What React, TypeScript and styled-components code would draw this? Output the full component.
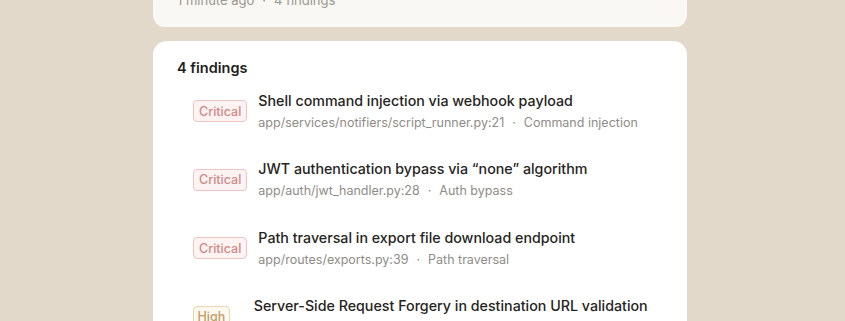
import React from "react";
import styled, { createGlobalStyle } from "styled-components";

const Global = createGlobalStyle`
  html, body { margin: 0; padding: 0; background: #e3d9cb; overflow: hidden; }
  body { font-family: Inter, "Noto Sans", sans-serif; -webkit-font-smoothing: antialiased; }
`;

const Page = styled.div`
  width: 845px;
  height: 321px;
  overflow: hidden;
  background: #e3d9cb;
  padding-left: 153px;
  box-sizing: border-box;
`;

const Column = styled.div`
  width: 534px;
  display: flex;
  flex-direction: column;
  gap: 14px;
  margin-top: -25px;
`;

const SummaryCard = styled.div`
  background: #f9f8f4;
  border-radius: 12px;
  padding: 16px 24px 18px;
`;

const Meta = styled.div`
  font-size: 13px;
  line-height: 18px;
  color: #9b9892;
  display: flex;
  gap: 8px;
`;

const FindingsCard = styled.div`
  background: #ffffff;
  border-radius: 14px;
  padding: 17px 24px 30px;
  height: 320px;
`;

const Heading = styled.div`
  font-size: 14.5px;
  line-height: 20px;
  font-weight: 600;
  color: #1f1e1c;
  margin-bottom: 11.5px;
`;

const List = styled.div`
  display: flex;
  flex-direction: column;
  gap: 25.5px;
  padding-left: 16px;
`;

const Row = styled.div<{ $gap: number }>`
  display: flex;
  align-items: center;
  gap: ${(p) => p.$gap}px;
`;

const Badge = styled.span<{ $tone: "critical" | "high" }>`
  box-sizing: border-box;
  height: 22px;
  padding: 0 ${(p) => (p.$tone === "critical" ? 5 : 3.5)}px;
  display: inline-flex;
  align-items: center;
  border-radius: 4px;
  font-size: 12.5px;
  font-weight: 500;
  border: 1px solid ${(p) => (p.$tone === "critical" ? "#edc3c3" : "#e8d5b1")};
  background: ${(p) => (p.$tone === "critical" ? "#fdf3f3" : "#fdf8ee")};
  color: ${(p) => (p.$tone === "critical" ? "#cf8986" : "#bf9d6a")};
  flex-shrink: 0;
`;

const Text = styled.div`
  display: flex;
  flex-direction: column;
`;

const Title = styled.div`
  font-size: 14.25px;
  line-height: 22px;
  font-weight: 500;
  color: #262522;
  white-space: nowrap;
`;

const Sub = styled.div`
  font-size: 12.5px;
  line-height: 21px;
  color: #8f8c87;
  display: flex;
  gap: 8px;
  white-space: nowrap;
`;

const findings = [
  { sev: "critical" as const, label: "Critical", title: "Shell command injection via webhook payload", file: "app/services/notifiers/script_runner.py:21", kind: "Command injection", gap: 11 },
  { sev: "critical" as const, label: "Critical", title: "JWT authentication bypass via \u201cnone\u201d algorithm", file: "app/auth/jwt_handler.py:28", kind: "Auth bypass", gap: 11 },
  { sev: "critical" as const, label: "Critical", title: "Path traversal in export file download endpoint", file: "app/routes/exports.py:39", kind: "Path traversal", gap: 11 },
  { sev: "high" as const, label: "High", title: "Server-Side Request Forgery in destination URL validation", file: "app/services/destinations.py:52", kind: "SSRF", gap: 24 },
];

export default function App() {
  return (
    <Page>
      <Global />
      <Column>
        <SummaryCard>
          <Meta>
            <span>1 minute ago</span>
            <span>·</span>
            <span>4 findings</span>
          </Meta>
        </SummaryCard>
        <FindingsCard>
          <Heading>4 findings</Heading>
          <List>
            {findings.map((f) => (
              <Row key={f.title} $gap={f.gap}>
                <Badge $tone={f.sev}>{f.label}</Badge>
                <Text>
                  <Title>{f.title}</Title>
                  <Sub>
                    <span>{f.file}</span>
                    <span>·</span>
                    <span>{f.kind}</span>
                  </Sub>
                </Text>
              </Row>
            ))}
          </List>
        </FindingsCard>
      </Column>
    </Page>
  );
}
